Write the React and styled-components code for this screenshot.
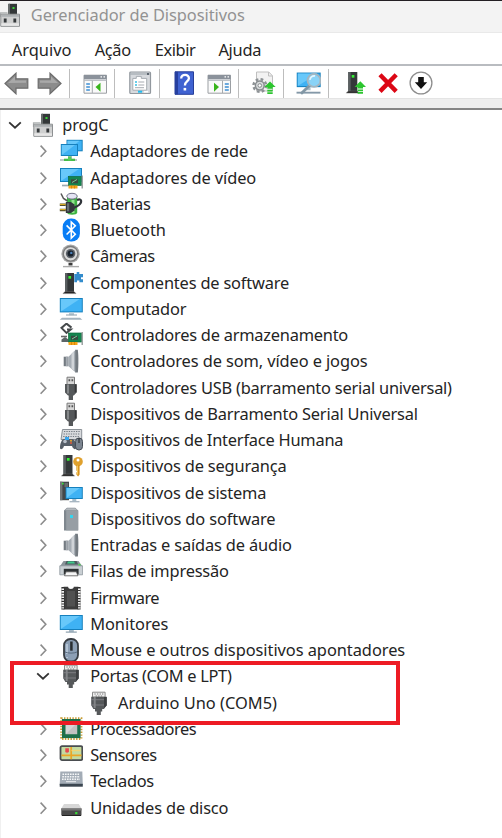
import React from "react";
import styled, { createGlobalStyle } from "styled-components";

const GlobalStyle = createGlobalStyle`
  * { box-sizing: border-box; }
  html, body { margin: 0; background: #fff; overflow: hidden; }
`;

const Window = styled.div`
  width: 502px;
  height: 838px;
  display: flex;
  flex-direction: column;
  background: #fff;
  color: #242424;
  font-family: "Noto Sans", "Open Sans", sans-serif;
  font-size: 16.4px;
  overflow: hidden;
`;

const TitleBar = styled.header`
  height: 32.5px;
  flex: none;
  display: flex;
  align-items: flex-start;
  border-top: 1px solid #231f23;
  border-bottom: 1px solid #e9e9e9;
  background: #f3f3f3;
  color: #929292;
  padding-top: 2px;
`;

const TitleIcon = styled.span`
  display: flex;
  flex: none;
  margin-left: -2px;
`;

const Title = styled.span`
  margin-left: 8.8px;
  line-height: 24.5px;
  white-space: nowrap;
  letter-spacing: ${(p) => p.$track}px;
`;

const MenuBar = styled.nav`
  height: 31.5px;
  flex: none;
  display: flex;
  padding-left: 11.8px;
`;

const MenuItem = styled.span`
  flex: none;
  width: ${(p) => p.$width}px;
  line-height: 34px;
  white-space: nowrap;
  letter-spacing: ${(p) => p.$track}px;
`;

const ToolBar = styled.div`
  height: 34px;
  flex: none;
  display: flex;
  align-items: center;
  border-top: 2px solid #b9bcc0;
  padding: 2px 0 0 3.5px;
`;

const Tool = styled.span`
  display: flex;
  flex: none;
  margin-right: ${(p) => p.$gap}px;
`;

const Divider = styled.span`
  flex: none;
  width: 1px;
  height: 29px;
  background: #bdbdbd;
  margin-right: ${(p) => p.$gap}px;
`;

const Band = styled.div`
  height: 12px;
  flex: none;
  background: #eeeeee;
  border-top: 1px solid #e4e4e4;
  border-bottom: 2px solid #858585;
`;

const Tree = styled.main`
  position: relative;
  flex: 1;
  padding-top: 1.9px;
  border-left: 1px solid #f0f0f0;
`;

const Row = styled.div`
  height: 26.25px;
  display: flex;
  align-items: center;
  padding-left: ${(p) => 2.3 + p.$level * 27.9}px;
`;

const Toggle = styled.span`
  width: 24px;
  flex: none;
  display: flex;
  justify-content: center;
`;

const RowIcon = styled.span`
  display: flex;
  flex: none;
  margin: 0 7.4px 0 3.6px;
`;

const Label = styled.span`
  white-space: nowrap;
  line-height: 26px;
  letter-spacing: ${(p) => p.$track}px;
`;

const Highlight = styled.div`
  position: absolute;
  left: 9px;
  top: 550.5px;
  width: 390px;
  height: 64px;
  border: 4.5px solid #ed1b24;
`;

const Svg = ({ size = 24, children }) => (
  <svg width={size} height={size} viewBox="0 0 24 24" fill="none">{children}</svg>
);

const Chevron = ({ open }) => (
  <svg width="14" height="14" viewBox="0 0 14 14" fill="none" strokeWidth={open ? 1.8 : 1.6}>
    {open ? <path d="M1.2 4.3 7 9.7l5.8-5.4" stroke="#333" /> : <path d="m4.6 1.6 5.2 5.6-5.2 5.6" stroke="#8c8c8c" />}
  </svg>
);

const Screen = ({ x, y, w, h }) => (
  <>
    <rect x={x} y={y} width={w} height={h} fill="#1680bd" />
    <rect x={x + 1} y={y + 1} width={w - 2} height={h - 2} fill="#3fb2f4" />
    <path d={`M${x + 1} ${y + h - 1}V${y + 1}H${x + w - 3}Z`} fill="#68c8fa" />
  </>
);

const Card = ({ y = 10 }) => (
  <>
    <rect x="9.5" y={y} width="13" height="9" fill="#14854f" stroke="#0d6a3d" strokeWidth=".7" />
    <rect x="12" y={y + 2.8} width="7" height="4" fill="#394a40" />
    <path d={`M13 ${y + 6}l5-3`} stroke="#7ac79b" strokeWidth="1" />
    <rect x="9.5" y={y + 9} width="9" height="3" fill="#f5a51a" />
    <path d={`M12.5 ${y + 9}v3M15.5 ${y + 9}v3`} stroke="#ce7a06" strokeWidth=".7" />
    <path d={`M23.2 ${y - 1}v13`} stroke="#8d9494" strokeWidth="1.3" />
  </>
);

const Tower = ({ x = 5, y = 1, h = 19 }) => (
  <>
    <path d={`M${x + 1} ${y}h9v${h}h-9z`} fill="#34383a" />
    <path d={`M${x + 1} ${y}h2.4v${h}h-2.4z`} fill="#5a5f61" />
    <rect x={x + 4.4} y={y + 3} width="2.7" height="2.7" fill="#35ee35" />
    <path d={`M${x - 1} ${y + h + 1.6}l2-2h9l2 2z`} fill="#222" stroke="#777" strokeWidth=".5" />
  </>
);

const Speaker = () => (
  <Svg>
    <path d="M4.7 7.7h4.8v9.5H4.7z" fill="#737a81" />
    <path d="M6.8 7.7h2v9.5h-2z" fill="#a6acb2" />
    <path d="M9.5 7.7 16.7.8v22.8l-7.2-6.4z" fill="#a6adb4" />
    <path d="M12.5 4.8 15 2.4v19.4l-2.5-2.4z" fill="#d0d4d8" />
    <path d="M16.2.8h2.6c.8 6 .8 17 0 22.8h-2.6z" fill="#737a80" />
  </Svg>
);

const Usb = () => (
  <Svg>
    <path d="M8 1.2h7.5v7.5H8z" fill="#d6d6d6" stroke="#7a7a7a" />
    <path d="M9.5 3.3h1.7v1.9H9.5zM12.5 3.3h1.7v1.9h-1.7z" fill="#555" />
    <path d="M6 8h11.6v8.6l-2.8 3H14V24H9.7v-4.4H9l-3-3z" fill="#55585a" />
    <path d="M8 8.4h2v9H8z" fill="#85888a" />
    <path d="M15.7 8.4h1.9v8h-1.9z" fill="#363839" />
  </Svg>
);

const Port = () => (
  <Svg>
    <path d="M5.5 1.2h12.6v5H5.5z" fill="#f0f0f0" stroke="#8a8a8a" />
    <path d="M7.4 3h1.3M10 3h1.3M12.6 3h1.3M15 3h1.3M8.6 5h1.3M11.2 5h1.3M13.8 5h1.3" stroke="#777" />
    <path d="M4.2 5.8h15.5v8.5L17 18h-1.8v2.4h-1.4V24H9.7v-3.6H8V18H6.4l-2.2-3.7z" fill="#55585a" />
    <path d="M6.7 6h2v11h-2z" fill="#828486" />
    <path d="M4.2 8.7h15.5M4.2 14h15.5" stroke="#85878a" strokeWidth=".8" />
    <path d="M17 6h2.7v8.4L17 17z" fill="#3c3e40" />
  </Svg>
);

const Host = () => (
  <Svg>
    <path d="M11 .8h8v13h-8z" fill="#333738" />
    <path d="M10 .8h2v13h-2z" fill="#666b6b" />
    <path d="M14.5 4h2v2h-2z" fill="#3ad738" />
    <path d="M2.5 14V9.8h7" stroke="#aeb2b3" strokeWidth="1.2" />
    <path d="M2.8 11.2h18.7v12.1H2.8z" fill="#cfd0d0" stroke="#8d9092" />
    <path d="M3.3 11.8h17.7v2H3.3z" fill="#aeb2b4" />
    <path d="M5.8 15.5h2.8v4H5.8zM15.4 15.5h2.8v4h-2.8z" fill="#35393b" />
    <path d="M3.3 20.3h17.7v2.5H3.3z" fill="#e6e6e6" />
  </Svg>
);

const icons = {
  host: <Host />,
  network: (
    <Svg>
      <Screen x={7.5} y={.8} w={16.2} h={11.5} />
      <Screen x={1.8} y={5} w={17.2} h={12} />
      <path d="M9 17h4v3H9z" fill="#bcc7cc" />
      <path d="M1 21h17" stroke="#bfc8c8" strokeWidth="2" />
      <path d="M5 19.7h11v2.3H5z" fill="#45bd48" />
      <path d="M9 17.4h3.4v4H9z" fill="#58c95b" />
    </Svg>
  ),
  video: <Svg><Screen x={1} y={2} w={22} h={14} /><path d="M3 19.5h7" stroke="#9daab1" strokeWidth="1.7" /><Card y={10.5} /></Svg>,
  battery: (
    <Svg>
      <path d="M8 4.5C8 1.5 18.2 1.5 18.2 4.5v16C18.2 23.5 8 23.5 8 20.5z" fill="#3fb344" />
      <ellipse cx="13" cy="4.2" rx="5.2" ry="2.9" fill="#e4e4f4" stroke="#74748a" />
      <path d="M12.5 8h3v13h-3z" fill="#91e28c" />
      <path d="M2 1.5 4.5 6.5l4 2.5" stroke="#555" strokeWidth="1.5" />
      <path d="M18 8c5.2-2.3 5 2.7 2 5s-4.8 2.5-6 3.2" stroke="#30353a" strokeWidth="2.2" />
      <path d="M6.8 10h5l3.8 2.5v6L11.8 21h-5z" fill="#33383c" />
      <path d="M8 11.3h2.2v8H8z" fill="#666e73" />
      <path d="M.8 12.8h6M.8 18h6" stroke="#55502a" strokeWidth="2.4" /><path d="M1 12.4h5.5M1 17.6h5.5" stroke="#e6b528" />
    </Svg>
  ),
  bluetooth: (
    <Svg>
      <rect x="3.7" y=".6" width="17.2" height="23" rx="8.2" fill="#087df5" />
      <path d="m7.6 7.4 8.7 8.8-4 3.9V4l4 3.8-8.7 8.7" stroke="#fff" strokeWidth="1.6" />
    </Svg>
  ),
  camera: (
    <Svg>
      <circle cx="11.6" cy="9.8" r="9.2" fill="#a8a8a8" />
      <circle cx="11.6" cy="9.8" r="7.3" fill="#dadada" stroke="#7b7b7b" strokeWidth="1.3" />
      <circle cx="11.6" cy="9.6" r="4.7" fill="#5c6168" />
      <circle cx="11.6" cy="9.6" r="3" fill="#19222d" />
      <circle cx="12.3" cy="8.9" r="1.2" fill="#4d81ba" />
      <path d="M9.5 19h4v2.5h-4z" fill="#3c3c3c" /><path d="M4 22.6h16" stroke="#aaa" strokeWidth="1.4" />
    </Svg>
  ),
  component: (
    <Svg>
      <Tower x={5} y={2} h={19} />
      <path d="M15.3 3h2.4V1h2.6v2H24v3.3h-2v2h2v3h-3.6V9.5H18v1.8h-2.7z" fill="#338ccc" />
    </Svg>
  ),
  computer: (
    <Svg>
      <Screen x={.8} y={1} w={23} h={14.4} />
      <path d="M10 15.5h5v2.7h-5z" fill="#b9cbd5" /><path d="M7 18h11" stroke="#8c9fac" />
      <path d="m.7 22.8 2.3-2h18l2.3 2z" fill="#a5b4bf" />
    </Svg>
  ),
  storage: (
    <Svg>
      <path d="m12.5 4.6-5-4-5 4.3 5 5 4.2-3.5H8" stroke="#45494b" strokeWidth="2" />
      <path d="M2 13.5h6" stroke="#666" strokeWidth="1.6" />
      <path d="M2.5 19v-2.5L6 14l3.5 2.5V19z" fill="#5c6466" />
      <Card y={10} />
    </Svg>
  ),
  speaker: <Speaker />,
  usb: <Usb />,
  hid: (
    <Svg>
      <path d="M3.5 1.5h19.2v10H2z" fill="#d8dadd" stroke="#8c9298" />
      <path d="M5 3.5h16M4.6 6h16M4.2 8.5h16" stroke="#737a82" strokeDasharray="1.3 1.1" />
      <path d="M1 20c0-5 2-9 4-9h8c3 0 4 4 4 9 0 2-3 1.4-4-2H5c-1 3.5-4 4-4 2z" fill="#565e68" />
      <circle cx="6" cy="13.5" r="1.8" fill="#b8c0ca" /><path d="M6 9h4v3H6z" fill="#37a5ed" />
      <circle cx="12" cy="12.7" r="1" fill="#e6a62e" /><circle cx="12" cy="15" r="1" fill="#e05b3d" />
      <rect x="16.5" y="10" width="7" height="12" rx="3.4" fill="#7c8590" stroke="#454c55" /><path d="M20 10v5" stroke="#30363c" strokeWidth="1.3" />
    </Svg>
  ),
  security: (
    <Svg>
      <Tower x={3.5} y={1} h={19.5} />
      <circle cx="19" cy="7.7" r="4.8" fill="#e0a12e" /><circle cx="19" cy="6" r="1.5" fill="#fff" />
      <path d="M17.4 11h3.2v9.5l-1.5 2-1.7-2v-2l1-1-1-1z" fill="#d89420" />
      <path d="M18.5 11.5v9" stroke="#f3c65d" />
    </Svg>
  ),
  system: (
    <Svg>
      <path d="M1 .7h9v18.5H1z" fill="#44484a" /><path d="M1 .7h2.4v18.5H1z" fill="#737779" />
      <path d="M3 1.7h1.6v1.8H3z" fill="#39e639" /><path d="M5.5 3H9M5.5 5H9" stroke="#8e9294" />
      <Screen x={6.6} y={6} w={17.2} h={12} /><path d="M13.3 18h4v2.5h-4z" fill="#a9bcc9" /><path d="M10.5 20.7h10" stroke="#a5b4bf" strokeWidth="1.3" />
    </Svg>
  ),
  software: (
    <Svg>
      <path d="M5 3.5 8 .8h8.2l3 2.7v20H5z" fill="#7f878e" />
      <path d="M7.2 3.5h12v19.8h-12z" fill="#979ea4" /><path d="M5.8 3.2 8.2 1.2h7.9l2.3 2z" fill="#b4b9bd" />
      <path d="M11 8h3v3h-3z" fill="#35d5ee" />
    </Svg>
  ),
  printer: (
    <Svg>
      <path d="M4.5 2h15l4 5.5H.8z" fill="#8a9399" /><path d="M7.5 2h10l1.7 3.4H6z" fill="#4b5a5e" /><path d="m9 2.4-1 2.2h8l-1-2.2z" fill="#41c98c" />
      <path d="M.8 6.8h22.8v9H.8z" fill="#c9cfd3" stroke="#8d969c" strokeWidth=".8" />
      <path d="M19.5 5h2v1.5h-2z" fill="#45dc45" />
      <path d="M4.8 9.8h14.8v5.5H4.8z" fill="#2f3335" /><path d="M7 12.8h10.4l1.5 4H5.5z" fill="#f6f6f6" stroke="#555" strokeWidth=".8" />
    </Svg>
  ),
  firmware: (
    <Svg>
      <path d="M4.6.8h4.5c0 3 5.7 3 5.7 0h4.6v22.8H4.6z" fill="#3d3d3d" />
      <path d="M8 5h8v15.5H8z" fill="#515151" />
      <path d="M3.9 1v22.5M20.1 1v22.5" stroke="#303030" strokeWidth="3" />
      <path d="M3.7 2.4v20M20.3 2.4v20" stroke="#f3f3f3" strokeWidth="2.6" strokeDasharray="1.6 1.1" />
    </Svg>
  ),
  monitor: (
    <Svg><Screen x={.8} y={3} w={23} h={15} /><path d="M10 18h4.8v2H10z" fill="#a9bcc9" /><path d="M6.8 20.1h11" stroke="#8c9fac" strokeWidth="1.2" /></Svg>
  ),
  mouse: (
    <Svg>
      <rect x="5" y="1" width="14" height="22.5" rx="6.4" fill="#8c9fb5" stroke="#383d43" strokeWidth="1.8" />
      <path d="M8 6v10M8 19v1" stroke="#bacada" strokeWidth="1.7" />
      <path d="M6 14c3 1.5 9 1.5 12 0" stroke="#596b7f" /><path d="M12.4 3.5v9.2" stroke="#292d31" strokeWidth="2.5" />
    </Svg>
  ),
  port: <Port />,
  cpu: (
    <Svg>
      <rect x="2.2" y="1.2" width="20.2" height="20.7" stroke="#c99d35" strokeWidth="2" strokeDasharray="1.4 1.4" />
      <rect x="3" y="2" width="18.6" height="19.1" fill="#1e704b" /><rect x="6.5" y="5.5" width="11.7" height="11.7" fill="#d6d6d6" />
      <path d="m7 17 11-11v11z" fill="#c2c2c2" />
    </Svg>
  ),
  sensor: (
    <Svg>
      <rect x="1.5" y="3.1" width="21.8" height="14" rx="1.5" fill="#c4dba0" stroke="#4a4d50" strokeWidth="1.8" />
      <path d="M2.5 12.3h20M12.2 4v12.3" stroke="#eba624" strokeWidth="1.7" /><path d="M12.5 7.5h9" stroke="#f2d573" strokeWidth="1.4" />
      <path d="M6.3 5.2h3.6v4H8.7L8 10.5l-.6-1.3H6.3z" fill="#e8484c" />
    </Svg>
  ),
  keyboard: (
    <Svg>
      <path d="M1.3 2.6h22l.5 13.5H.7z" fill="#a3acb6" /><path d="M.7 14.8h23.1v2.9H.7z" fill="#3b4650" />
      <path d="M3.5 5.2h17.5M3.3 7.7H21M3 10.2h18" stroke="#f5f7f8" strokeWidth="1.5" strokeDasharray="1.6 .9" /><path d="M7 12.7h10" stroke="#eef1f3" />
    </Svg>
  ),
  disk: (
    <Svg>
      <path d="M5 8h14.8l3 5H2z" fill="#d7d7d7" /><path d="M2.3 12.5h20.2v7H2.3z" fill="#4a4a4a" />
      <path d="M2.3 12.5h20.2v2H2.3z" fill="#777" /><path d="M16.2 16h2.2v2.2h-2.2z" fill="#36df36" />
      <path d="M3 19.5h19" stroke="#222" />
    </Svg>
  ),
};

const Arrow = ({ flip }) => (
  <svg width="25" height="23" viewBox="0 0 25 23">
    <path
      d="M1 11.5 12 1.2v5.6h11.8v9.4H12v5.6z"
      transform={flip ? "translate(25 0) scale(-1 1)" : undefined}
      fill="#8c8c8c" stroke="#6c6c6c" strokeWidth="1.2"
    />
    <path d="M4 11 11 4.5v4h11v2.2z" transform={flip ? "translate(25 0) scale(-1 1)" : undefined} fill="#a9a9a9" />
  </svg>
);

const Panel = ({ flip }) => (
  <Svg>
    <path d="M1 4.2h22.5v18H1z" fill="#fafafa" stroke="#9b9fa3" />
    <path d="M1 4h22.5v4.2H1z" fill="#8b929b" /><path d="M17.5 5.8h1.5M20.5 5.8H22" stroke="#fff" strokeWidth="1.3" />
    <path d="M1 9.2h22.5" stroke="#b8bdc2" strokeWidth="1.4" />
    {flip ? (
      <>
        <path d="M15.5 9.7V22" stroke="#a6aaae" /><path d="M17.8 13h4M17.8 16h4M17.8 19h4" stroke="#3d8fd4" strokeWidth="1.5" /><path d="m7 11.8 5 4.3-5 4.7z" fill="#39b51c" />
      </>
    ) : (
      <>
        <path d="M9.3 9.7V22" stroke="#a6aaae" /><path d="M3.2 13h3.7M3.2 16h3.7M3.2 19h3.7" stroke="#3d8fd4" strokeWidth="1.5" /><path d="m17.5 11.8-5 4.3 5 4.7z" fill="#39b51c" />
      </>
    )}
  </Svg>
);

const UpArrow = ({ x, y }) => (
  <path d={`M${x} ${y}l5.7 5.6h-3v1.6h-5.4v-1.6h-3zM${x - 2.7} ${y + 8.2}h5.4v1.7h-5.4zM${x - 2.7} ${y + 10.8}h5.4v1.7h-5.4z`} fill="#2cc52f" />
);

const tools = {
  properties: (
    <Svg>
      <rect x="1.8" y="1" width="20.7" height="21.5" rx="1" fill="#d7dade" stroke="#92989e" strokeWidth="1.2" />
      <path d="M2 3h20" stroke="#aab0b6" strokeWidth="1.4" /><path d="M19 3h2" stroke="#3f4a55" strokeWidth="1.4" />
      <path d="M4.8 7.4h3.5v-2h5v2h5.4v11.8H4.8z" fill="#fff" stroke="#a7adb2" />
      <path d="M7 11h2M7 14h2" stroke="#39bfe2" strokeWidth="1.5" /><path d="M10.3 11h6M10.3 14h6M7 16.7h9" stroke="#a5aab0" />
      <path d="M10 20.7h4.2" stroke="#20bdf1" strokeWidth="2" /><path d="M16 20.7h4" stroke="#fff" strokeWidth="1.6" />
    </Svg>
  ),
  help: (
    <Svg>
      <path d="M3 .8h18.5v22.5H3z" fill="#3f62d1" stroke="#273f99" /><path d="M3 .8h3v22.5H3z" fill="#263f9f" />
      <path d="M9.2 7.4c0-5 8-4.6 7.7 0-.2 3.2-4 3-4 7" stroke="#fff" strokeWidth="2.3" /><path d="M11.6 16.9h2.6v2.6h-2.6z" fill="#fff" />
    </Svg>
  ),
  update: (
    <Svg>
      <path d="M4.5 1h12.3l3.7 3.8V20h-16z" fill="#f2f2f2" stroke="#bfbfbf" /><path d="M16.5 1v4h4" stroke="#bfbfbf" />
      <circle cx="7.8" cy="14.5" r="6.3" stroke="#8d9295" strokeWidth="2.4" strokeDasharray="2.7 2.25" />
      <circle cx="7.8" cy="14.5" r="4.4" fill="#d9dcdd" stroke="#878c8f" strokeWidth="1.5" /><circle cx="7.8" cy="14.5" r="1.8" fill="#fff" stroke="#858a8c" />
      <UpArrow x={18} y={10.5} />
    </Svg>
  ),
  scan: (
    <Svg size={25}>
      <Screen x={.7} y={1.5} w={23} h={14} />
      <path d="M10 15.5h4v3h-4z" fill="#aabfca" /><path d="M.5 20.8h23" stroke="#8498a8" strokeWidth="1.8" />
      <path d="m12.8 14.2-8 7.7" stroke="#8297a5" strokeWidth="2.7" />
      <circle cx="17.3" cy="9" r="6.2" fill="#89d3f7" stroke="#a4b5bf" strokeWidth="1.8" /><path d="M13.3 8.5c.7-3 3-4 5-3.8" stroke="#e2f6ff" strokeWidth="1.5" />
    </Svg>
  ),
  driver: <Svg><Tower x={4.3} y={1} h={19.5} /><UpArrow x={17.3} y={10.3} /></Svg>,
  remove: <Svg><path d="m4 3.7 16.2 16.7M20.2 3.7 4 20.4" stroke="#dc0715" strokeWidth="4.4" /></Svg>,
  down: (
    <Svg>
      <circle cx="12" cy="12" r="10.9" fill="#fff" stroke="#8d8d8d" strokeWidth="1.3" />
      <path d="M9.2 6h5.6v5.3h3.4L12 18l-6.2-6.7h3.4z" fill="#111" />
    </Svg>
  ),
};

const rows = [
  [0, "host", "progC", -0.15, true],
  [1, "network", "Adaptadores de rede", -0.19],
  [1, "video", "Adaptadores de vídeo", -0.11],
  [1, "battery", "Baterias", -0.35],
  [1, "bluetooth", "Bluetooth", -0.03],
  [1, "camera", "Câmeras", -0.45],
  [1, "component", "Componentes de software", -0.18],
  [1, "computer", "Computador", -0.15],
  [1, "storage", "Controladores de armazenamento", -0.23],
  [1, "speaker", "Controladores de som, vídeo e jogos", -0.1],
  [1, "usb", "Controladores USB (barramento serial universal)", -0.22],
  [1, "usb", "Dispositivos de Barramento Serial Universal", -0.2],
  [1, "hid", "Dispositivos de Interface Humana", -0.22],
  [1, "security", "Dispositivos de segurança", -0.16],
  [1, "system", "Dispositivos de sistema", -0.16],
  [1, "software", "Dispositivos do software", -0.11],
  [1, "speaker", "Entradas e saídas de áudio", -0.15],
  [1, "printer", "Filas de impressão", -0.19],
  [1, "firmware", "Firmware", -0.45],
  [1, "monitor", "Monitores", -0.04],
  [1, "mouse", "Mouse e outros dispositivos apontadores", -0.05],
  [1, "port", "Portas (COM e LPT)", -0.3, true],
  [2, "port", "Arduino Uno (COM5)", 0, null],
  [1, "cpu", "Processadores", -0.44],
  [1, "sensor", "Sensores", -0.38],
  [1, "keyboard", "Teclados", -0.35],
  [1, "disk", "Unidades de disco", -0.14],
];

export default function App() {
  return (
    <Window>
      <GlobalStyle />
      <TitleBar>
        <TitleIcon><Host /></TitleIcon>
        <Title $track={-0.05}>Gerenciador de Dispositivos</Title>
      </TitleBar>
      <MenuBar>
        <MenuItem $width={83} $track={0}>Arquivo</MenuItem>
        <MenuItem $width={60} $track={-0.4}>Ação</MenuItem>
        <MenuItem $width={63.6} $track={-0.4}>Exibir</MenuItem>
        <MenuItem $width={60} $track={-0.25}>Ajuda</MenuItem>
      </MenuBar>
      <ToolBar>
        <Tool $gap={8.5}><Arrow /></Tool>
        <Tool $gap={6.5}><Arrow flip /></Tool>
        <Divider $gap={13} />
        <Tool $gap={7.5}><Panel /></Tool>
        <Divider $gap={12.5} />
        <Tool $gap={7.5}>{tools.properties}</Tool>
        <Divider $gap={12} />
        <Tool $gap={10.5}>{tools.help}</Tool>
        <Tool $gap={7.5}><Panel flip /></Tool>
        <Divider $gap={12.7} />
        <Tool $gap={7.7}>{tools.update}</Tool>
        <Divider $gap={12} />
        <Tool $gap={6.8}>{tools.scan}</Tool>
        <Divider $gap={14} />
        <Tool $gap={8.5}>{tools.driver}</Tool>
        <Tool $gap={9.5}>{tools.remove}</Tool>
        <Tool $gap={0}>{tools.down}</Tool>
      </ToolBar>
      <Band />
      <Tree>
        {rows.map(([level, icon, text, track, open]) => (
          <Row key={text} $level={level}>
            <Toggle>{open !== null && <Chevron open={open} />}</Toggle>
            <RowIcon>{icons[icon]}</RowIcon>
            <Label $track={track}>{text}</Label>
          </Row>
        ))}
        <Highlight />
      </Tree>
    </Window>
  );
}
